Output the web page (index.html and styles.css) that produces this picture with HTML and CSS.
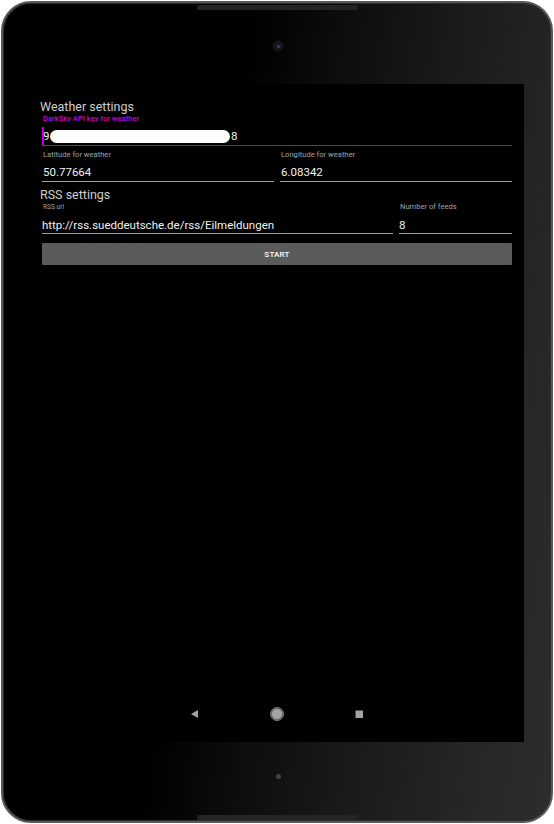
FILE: index.html
```html
<!DOCTYPE html>
<html>
<head>
<meta charset="utf-8">
<link rel="stylesheet" href="styles.css">
</head>
<body>
<div class="device">
  <div class="speaker speaker-top"></div>
  <div class="speaker speaker-bottom"></div>
  <div class="bezel-top"><div class="camera"><div class="lens"></div></div></div>
  <div class="screen">
    <div class="content">
      <div class="heading">Weather settings</div>
      <div class="field field-key">
        <div class="label label-active">DarkSky API key for weather</div>
        <div class="input input-active"><span class="cursor"></span>9<span class="redact"></span>8</div>
      </div>
      <div class="row row-half">
        <div class="field">
          <div class="label">Latitude for weather</div>
          <div class="input">50.77664</div>
        </div>
        <div class="field">
          <div class="label">Longitude for weather</div>
          <div class="input">6.08342</div>
        </div>
      </div>
      <div class="heading heading-rss">RSS settings</div>
      <div class="row row-rss">
        <div class="field">
          <div class="label label-small">RSS url</div>
          <div class="input input-rss">http://rss.sueddeutsche.de/rss/Eilmeldungen</div>
        </div>
        <div class="field">
          <div class="label">Number of feeds</div>
          <div class="input input-rss">8</div>
        </div>
      </div>
      <div class="button">START</div>
    </div>
    <div class="navbar">
      <svg class="nav-icon" width="10" height="10" viewBox="0 0 10 10"><polygon points="8,1 8,9 1,5" fill="#a4a4a4"/></svg>
      <svg class="nav-icon" width="14" height="14" viewBox="0 0 14 14"><circle cx="7" cy="7" r="5.6" fill="#a4a4a4" stroke="#5a5a5a" stroke-width="0.8"/><circle cx="7" cy="7" r="6.4" fill="none" stroke="#a4a4a4" stroke-width="0.9"/></svg>
      <svg class="nav-icon" width="10" height="10" viewBox="0 0 10 10"><rect x="1.5" y="1.5" width="7.5" height="7.5" fill="#a4a4a4"/></svg>
    </div>
  </div>
  <div class="bezel-bottom"><div class="dot"></div></div>
</div>
</body>
</html>
```

FILE: styles.css
```css
html, body {
  margin: 0;
  padding: 0;
  background: #ffffff;
}

body {
  width: 554px;
  height: 824px;
  overflow: hidden;
  font-family: Roboto, "Liberation Sans", sans-serif;
}

.device {
  position: relative;
  width: 548px;
  height: 818px;
  margin: 1px;
  border: 2px solid #58595c;
  border-radius: 30px;
  box-shadow: inset 0 0 0 1px #2b2b2d;
  background: linear-gradient(98deg, #000000 0%, #000000 38%, #0d0d0d 52%, #1b1b1b 70%, #272727 88%, #2d2d2d 100%);
  display: flex;
  flex-direction: column;
  overflow: hidden;
}

.speaker {
  position: absolute;
  left: 194px;
  width: 161px;
  height: 5px;
  background: repeating-linear-gradient(90deg, #1e1e1e 0, #1e1e1e 1px, #2a2a2a 1px, #2a2a2a 2px);
  border-radius: 2px;
}

.speaker-top {
  top: 2px;
}

.speaker-bottom {
  bottom: 1px;
}

.bezel-top {
  height: 81px;
  display: flex;
  justify-content: center;
}

.camera {
  margin-top: 38px;
  margin-left: 2px;
  width: 10px;
  height: 10px;
  border-radius: 50%;
  background: #161618;
  box-shadow: 0 0 0 1px #0c0c0c;
  display: flex;
  align-items: center;
  justify-content: center;
}

.lens {
  width: 3px;
  height: 3px;
  border-radius: 50%;
  background: #34407a;
}

.screen {
  margin-left: 27px;
  width: 494px;
  height: 658px;
  background: #000000;
  display: flex;
  flex-direction: column;
}

.content {
  flex: 1;
  padding: 15px 12px 0 10px;
}

.heading {
  color: #cfcfcf;
  font-size: 12.5px;
  line-height: 16px;
  height: 16px;
}

.heading-rss {
  margin-top: 5px;
}

.field {
  display: flex;
  flex-direction: column;
  min-width: 0;
}

.field-key {
  margin-left: 2px;
}

.label {
  color: #a3a3a3;
  font-size: 7.6px;
  line-height: 8px;
  height: 8px;
  padding-left: 1px;
  white-space: nowrap;
}

.label-small {
  font-size: 6.6px;
}

.label-active {
  color: #c900dc;
  font-weight: 500;
}

.input {
  position: relative;
  color: #f2f2f2;
  font-size: 11.5px;
  line-height: 14px;
  padding: 6px 0 2px 1px;
  border-bottom: 1px solid #9c9c9c;
  white-space: nowrap;
  overflow: hidden;
}

.input-active {
  border-bottom: 1px solid #b800cc;
  display: flex;
  align-items: center;
}

.cursor {
  position: absolute;
  left: 0;
  top: 4px;
  width: 1.5px;
  height: 18px;
  background: #c900dc;
}

.redact {
  display: inline-block;
  width: 180px;
  height: 13px;
  margin: 0 1px 0 0.5px;
  border-radius: 6.5px;
  background: #ffffff;
}

.row {
  display: grid;
  column-gap: 6px;
  margin-left: 2px;
}

.row-half {
  grid-template-columns: 232px 232px;
  margin-top: 5px;
}

.row-rss {
  grid-template-columns: 351px 113px;
}

.input-rss {
  padding: 7px 0 1px 0;
}

.button {
  margin: 9px 0 0 2px;
  height: 22px;
  background: #5b5b5b;
  color: #ffffff;
  font-size: 8px;
  font-weight: 500;
  letter-spacing: 0.2px;
  display: flex;
  align-items: center;
  justify-content: center;
  border-radius: 1px;
}

.navbar {
  height: 52px;
  padding-bottom: 4px;
  display: flex;
  align-items: center;
  justify-content: center;
  gap: 70px;
  box-sizing: border-box;
}

.nav-icon {
  display: block;
}

.bezel-bottom {
  flex: 1;
  display: flex;
  justify-content: center;
}

.dot {
  margin-top: 32px;
  margin-left: 2px;
  width: 5px;
  height: 5px;
  border-radius: 50%;
  background: #444444;
}
```
